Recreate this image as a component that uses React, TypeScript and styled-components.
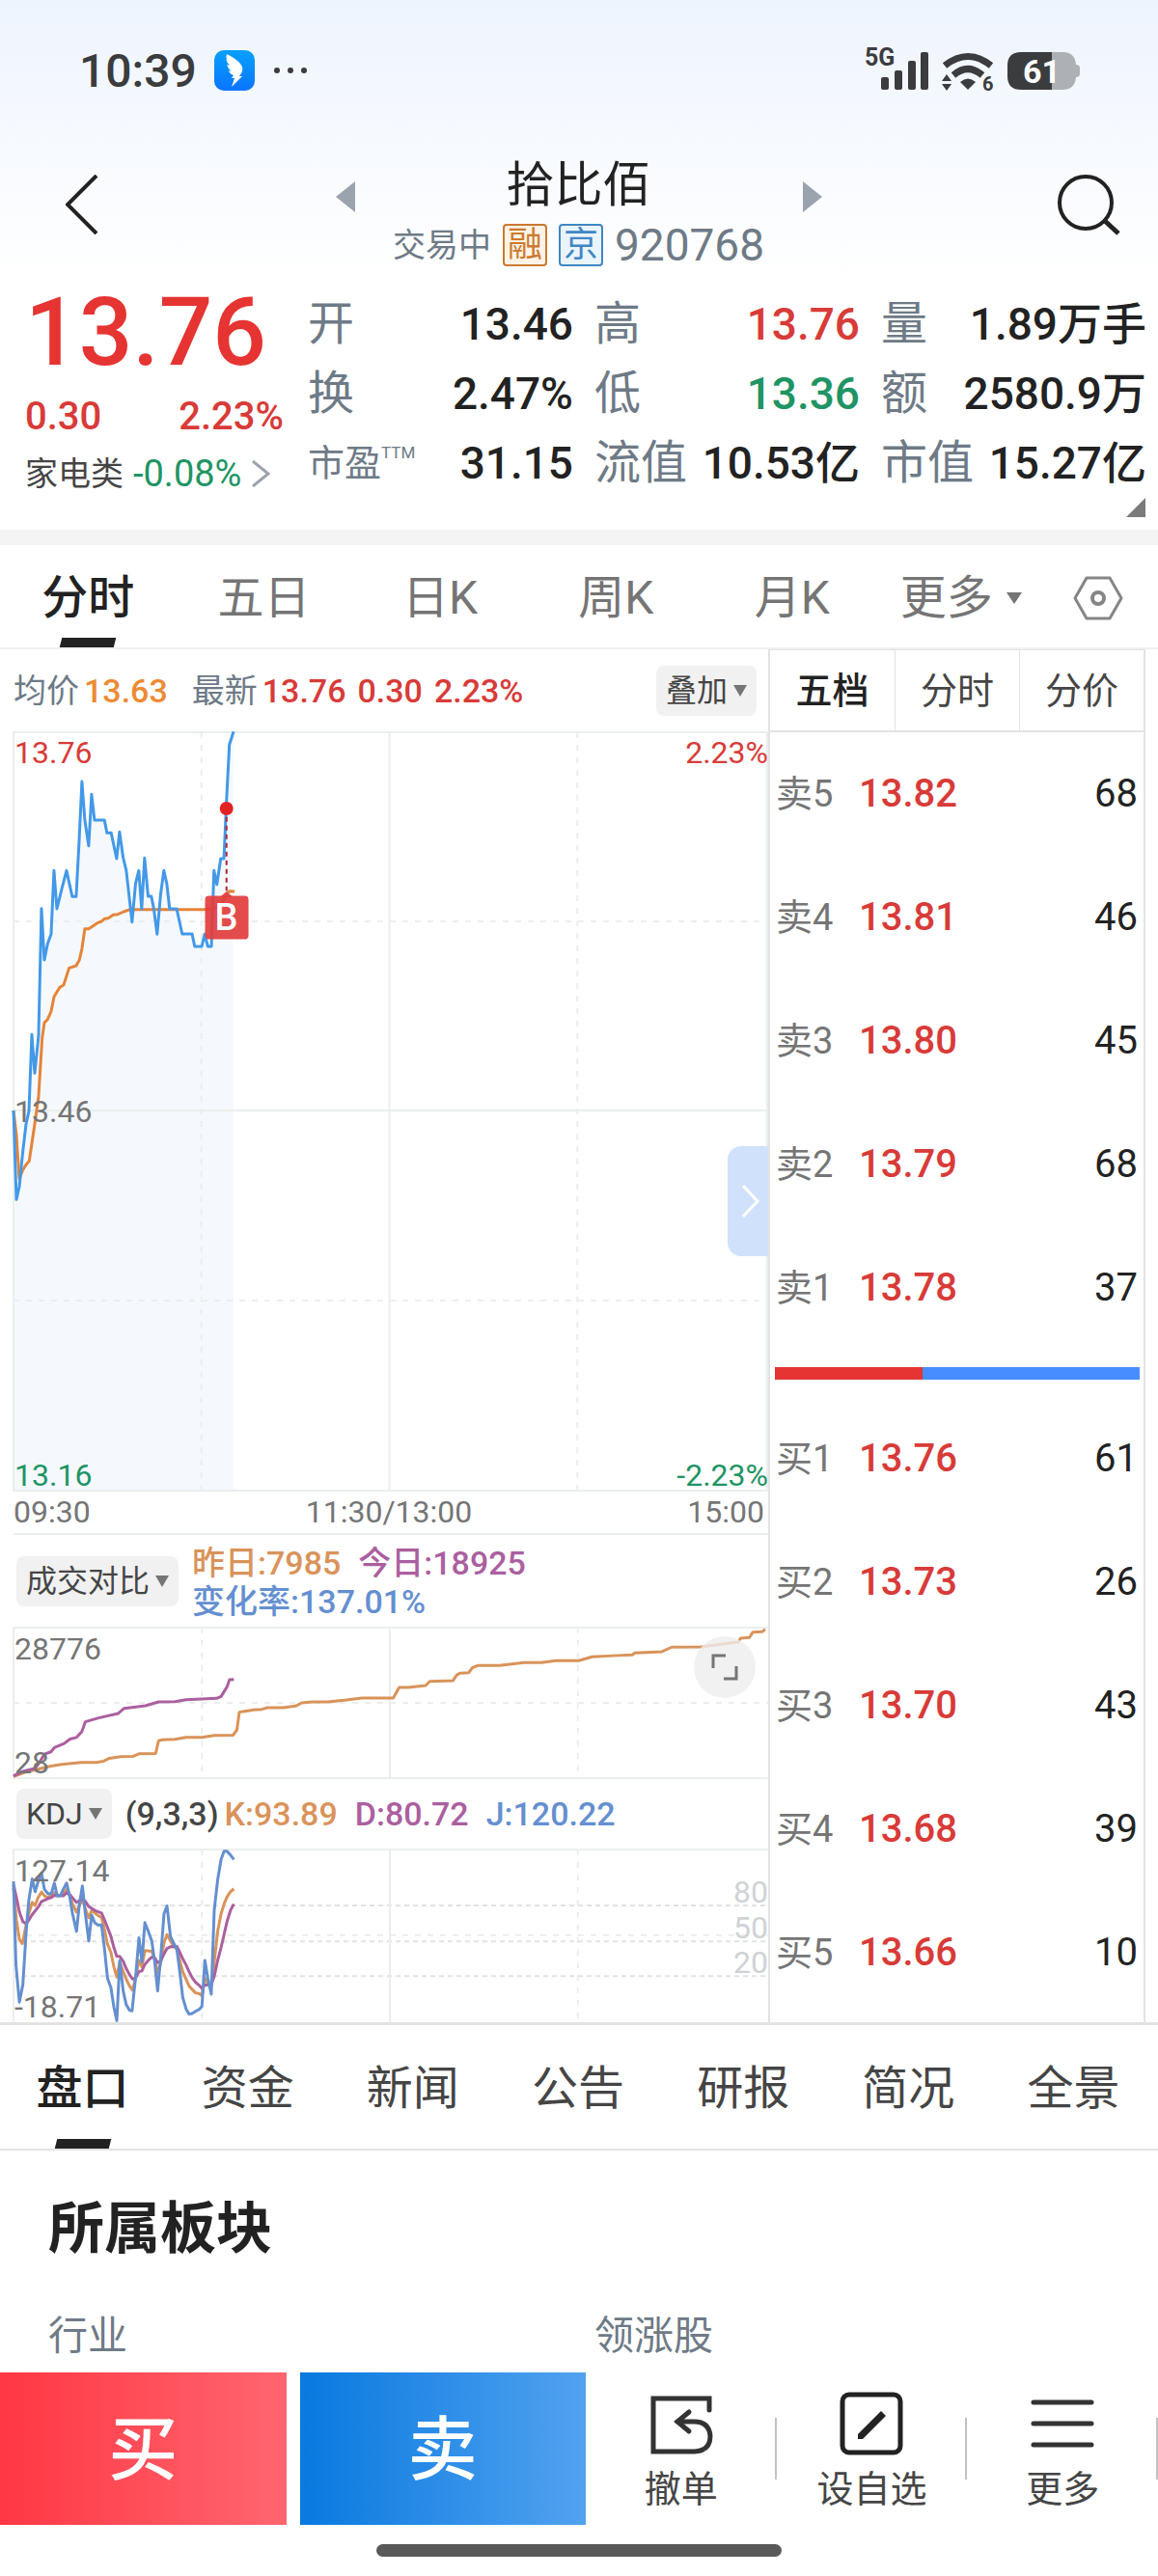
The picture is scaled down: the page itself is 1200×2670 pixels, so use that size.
import React, { useState } from "react";
import styled, { createGlobalStyle } from "styled-components";

const color = {
  ink: "#222222",
  text: "#454545",
  muted: "#757575",
  slate: "#6e7a86",
  red: "#d83b38",
  hot: "#e53432",
  green: "#1f9464",
  orange: "#d9935a",
  purple: "#ab5f9f",
  blue: "#648fd0",
  line: "#e3e3e3",
  grid: "#ebeeee",
};

const GlobalStyle = createGlobalStyle`
  *, *::before, *::after { box-sizing: border-box; }
  body { margin: 0; background: #fff; }
  body, button, table {
    font-family: Roboto, "Noto Sans CJK SC", sans-serif;
    color: ${color.ink};
  }
  button { margin: 0; padding: 0; border: 0; background: none; cursor: pointer; }
  svg { display: block; }
  h1, h2, dl, dt, dd, p { margin: 0; font-weight: 400; }
`;

const Screen = styled.div`
  width: 100%;
  background: linear-gradient(#eef4fe 0, #ffffff 290px);
`;

/* ---------- status bar ---------- */

const StatusBar = styled.div`
  display: flex;
  align-items: center;
  height: 146px;
  padding: 0 80px 0 82px;
  color: #3b3c3e;
`;

const Clock = styled.time`
  padding-top: 2px;
  font-size: 48px;
  line-height: 56px;
  font-weight: 500;
`;

const AppBadge = styled.span`
  display: grid;
  place-items: center;
  width: 42px;
  height: 42px;
  margin: 0 20px 0 18px;
  border-radius: 10px;
  background: linear-gradient(#07a0fe, #0a75fd);
`;

const StatusIcons = styled.svg`
  margin-left: auto;
  font-family: Roboto, sans-serif;
  font-weight: 700;
`;

/* ---------- header ---------- */

const Header = styled.header`
  display: grid;
  grid-template-columns: 1fr 504px 1fr;
  align-items: center;
  padding: 0 39px 0 68px;
  height: 132px;
`;

const IconButton = styled.button<{ $end?: boolean }>`
  display: flex;
  justify-self: ${(p) => (p.$end ? "end" : "start")};
`;

const Stepper = styled.div`
  display: flex;
  justify-content: space-between;
  align-items: flex-start;
  padding-top: 20px;
  margin-left: -15px;
  margin-right: 15px;
`;

const StepButton = styled.button`
  padding-top: 22px;
`;

const TitleBlock = styled.div`
  display: flex;
  flex-direction: column;
  align-items: center;
  gap: 12px;
`;

const Title = styled.h1`
  font-size: 50px;
  line-height: 52px;
`;

const SubTitle = styled.p`
  display: flex;
  align-items: center;
  gap: 12px;
  font-size: 34px;
  line-height: 48px;
  color: ${color.slate};
`;

const Tag = styled.span<{ $tone: string; $bg: string }>`
  width: 46px;
  height: 44px;
  border: 2px solid ${(p) => p.$tone};
  border-radius: 4px;
  background: ${(p) => p.$bg};
  color: ${(p) => p.$tone};
  line-height: 40px;
  text-align: center;
  font-size: 36px;
`;

const Code = styled.span`
  font-size: 46px;
`;

/* ---------- quote summary ---------- */

const Summary = styled.section`
  display: grid;
  grid-template-columns: 268px 1fr;
  column-gap: 25px;
  padding: 21px 12px 0 26px;
`;

const PricePane = styled.div`
  display: flex;
  flex-direction: column;
`;

const LastPrice = styled.div`
  font-size: 98px;
  line-height: 92px;
  font-weight: 500;
  color: ${color.hot};
`;

const ChangeRow = styled.div`
  display: flex;
  justify-content: space-between;
  font-size: 40px;
  line-height: 82px;
  font-weight: 500;
  color: ${color.red};
`;

const SectorLink = styled.a`
  display: flex;
  align-items: center;
  gap: 10px;
  font-size: 34px;
  line-height: 36px;
  color: ${color.text};
  text-decoration: none;
  white-space: nowrap;
`;

const SectorChange = styled.span`
  font-size: 38px;
  color: ${color.green};
`;

const Stats = styled.dl`
  display: grid;
  grid-template-columns: repeat(3, 1fr);
  grid-auto-rows: 72px;
  column-gap: 22px;
  padding-top: 1px;
`;

const Stat = styled.div`
  display: flex;
  justify-content: space-between;
  align-items: center;
  white-space: nowrap;
`;

const StatLabel = styled.dt<{ $small?: boolean }>`
  display: flex;
  font-size: ${(p) => (p.$small ? 38 : 48)}px;
  line-height: 72px;
  color: ${color.slate};
`;

const Sup = styled.sup`
  font-size: 17px;
  line-height: 50px;
`;

const StatValue = styled.dd<{ $tone?: string }>`
  font-size: 46px;
  line-height: 72px;
  font-weight: 500;
  color: ${(p) => p.$tone || color.ink};
`;

const ExpandRow = styled.div`
  display: flex;
  justify-content: flex-end;
  align-items: flex-start;
  height: 33px;
  padding-right: 13px;
`;

const Band = styled.div`
  height: 16px;
  background: #f4f4f4;
`;

/* ---------- tabs ---------- */

const PeriodTabs = styled.nav`
  display: flex;
  height: 108px;
  padding-right: 4px;
  border-bottom: 2px solid #f0f0f0;
`;

const Tab = styled.button<{ $active?: boolean; $grow?: number; $strong?: boolean }>`
  position: relative;
  display: flex;
  flex: ${(p) => p.$grow || 1} 1 0;
  align-items: center;
  justify-content: center;
  gap: 14px;
  padding-top: 3px;
  font-size: 48px;
  line-height: 56px;
  font-weight: ${(p) => (p.$active ? 500 : 400)};
  color: ${(p) => (p.$active ? color.ink : p.$strong ? color.text : color.muted)};
  white-space: nowrap;

  &::after {
    content: "";
    display: ${(p) => (p.$active ? "block" : "none")};
    position: absolute;
    bottom: 0;
    left: 50%;
    width: 56px;
    height: 10px;
    background: ${color.ink};
    transform: translateX(-50%) skewX(-14deg);
  }
`;

const InfoTabs = styled.nav`
  display: flex;
  height: 133px;
  padding-right: 2px;
  border-top: 3px solid ${color.line};
  border-bottom: 2px solid ${color.line};
`;

/* ---------- market area ---------- */

const Market = styled.main`
  display: grid;
  grid-template-columns: 2fr 1fr;
  padding: 0 13px 0 14px;
`;

const Charts = styled.div`
  min-width: 0;
`;

const PanelHead = styled.div<{ $height: number }>`
  display: flex;
  align-items: center;
  height: ${(p) => p.$height}px;
  font-size: 34px;
  line-height: 40px;
  font-weight: 500;
  white-space: nowrap;
`;

const Reading = styled.span<{ $tone: string; $gap?: number; $regular?: boolean }>`
  margin-right: ${(p) => p.$gap || 0}px;
  color: ${(p) => p.$tone};
  font-weight: ${(p) => (p.$regular ? 400 : 500)};
`;

const Picker = styled.button<{ $end?: boolean }>`
  display: flex;
  flex: none;
  align-items: center;
  gap: 6px;
  height: 52px;
  margin-left: ${(p) => (p.$end ? "auto" : "3px")};
  margin-right: ${(p) => (p.$end ? 12 : 14)}px;
  padding: 0 10px;
  border-radius: 8px;
  background: #f1f1f1;
  color: ${color.text};
  font-size: 32px;
  line-height: 40px;
`;

const Readings = styled.div`
  padding-top: 2px;
`;

const Plot = styled.div<{ $height: number }>`
  position: relative;
  height: ${(p) => p.$height}px;

  > svg {
    width: 100%;
    height: 100%;
    overflow: visible;
  }
`;

const AxisLabel = styled.span<{ $top: string; $right?: boolean; $tone?: string }>`
  position: absolute;
  top: ${(p) => p.$top};
  ${(p) => (p.$right ? "right: 0;" : "left: 1px;")}
  transform: translateY(-50%);
  font-size: 32px;
  line-height: 34px;
  color: ${(p) => p.$tone || color.muted};
`;

const BuyMark = styled.span`
  position: absolute;
  left: 28.2%;
  top: 24.4%;
  width: 45px;
  height: 45px;
  transform: translate(-50%, -50%);
  border-radius: 4px;
  background: rgba(226, 61, 61, 0.93);
  color: #fff;
  font-size: 38px;
  line-height: 45px;
  font-weight: 500;
  text-align: center;
`;

const Drawer = styled.button`
  position: absolute;
  right: 0;
  top: 429px;
  display: grid;
  place-items: center;
  width: 42px;
  height: 114px;
  padding-left: 6px;
  border-radius: 14px 0 0 14px;
  background: #d0e1fb;
`;

const FullButton = styled.button`
  position: absolute;
  right: 13px;
  top: 9px;
  display: grid;
  place-items: center;
  width: 64px;
  height: 64px;
  border-radius: 50%;
  background: rgba(238, 238, 238, 0.8);
`;

const TimeAxis = styled.div`
  display: flex;
  justify-content: space-between;
  height: 46px;
  padding: 0 4px 0 0;
  border-bottom: 2px solid ${color.grid};
  font-size: 32px;
  line-height: 44px;
  color: ${color.muted};
`;

/* ---------- order book ---------- */

const Book = styled.aside`
  border: solid ${color.line};
  border-width: 0 2px;
`;

const BookTabs = styled.div`
  display: grid;
  grid-template-columns: repeat(3, 1fr);
  height: 86px;
  border: solid ${color.line};
  border-width: 1px 0 2px;
`;

const BookTab = styled.button<{ $active?: boolean }>`
  border-left: 1px solid ${color.line};
  font-size: 38px;
  line-height: 44px;
  font-weight: ${(p) => (p.$active ? 500 : 400)};
  color: ${(p) => (p.$active ? color.ink : color.text)};

  &:first-child {
    border-left: 0;
  }
`;

const Levels = styled.table`
  width: 100%;
  border-collapse: collapse;
  font-size: 40px;
  line-height: 48px;
`;

const LevelName = styled.th`
  width: 86px;
  height: 128px;
  padding: 0 0 0 6px;
  font-size: 38px;
  font-weight: 400;
  text-align: left;
  color: ${color.muted};
`;

const LevelPrice = styled.td`
  padding: 0 0 0 6px;
  font-weight: 500;
  color: ${color.red};
`;

const LevelQty = styled.td`
  padding: 0 6px 0 0;
  text-align: right;
`;

const Balance = styled.div`
  height: 13px;
  margin: 18px 4px 18px 5px;
  background: linear-gradient(${color.hot}, ${color.hot}) #478dff;
  background-size: 40.5% 100%;
  background-repeat: no-repeat;
`;

/* ---------- sector section ---------- */

const Sector = styled.section`
  padding: 42px 18px 8px 50px;
`;

const SectorTitle = styled.h2`
  margin-bottom: 42px;
  font-size: 58px;
  line-height: 78px;
  font-weight: 700;
`;

const SectorHead = styled.div`
  display: grid;
  grid-template-columns: 1fr 1fr;
  font-size: 41px;
  line-height: 60px;
  color: ${color.slate};
`;

/* ---------- bottom bar ---------- */

const ActionBar = styled.footer`
  display: grid;
  grid-template-columns: 3fr 14px 3fr 2fr 2fr 2fr;
  height: 158px;
`;

const TradeButton = styled.button<{ $from: string; $to: string }>`
  padding-top: 4px;
  background: linear-gradient(90deg, ${(p) => p.$from}, ${(p) => p.$to});
  color: #fff;
  font-size: 72px;
  line-height: 80px;
  font-weight: 500;
`;

const Action = styled.button`
  position: relative;
  display: flex;
  flex-direction: column;
  align-items: center;
  padding-top: 20px;
  gap: 12px;
  font-size: 38px;
  line-height: 46px;
  color: ${color.text};

  &::after {
    content: "";
    position: absolute;
    right: 0;
    top: 47px;
    width: 2px;
    height: 64px;
    background: #c2c2c2;
  }
`;

const HomeArea = styled.div`
  display: flex;
  justify-content: center;
  padding: 20px 0;
`;

const HomeBar = styled.span`
  width: 35%;
  height: 13px;
  border-radius: 7px;
  background: #595959;
`;

/* ---------- drawings ---------- */

const Caret = ({ size = 16 }: { size?: number }) => (
  <svg width={size} height={12} viewBox="0 0 16 12" preserveAspectRatio="none" aria-hidden="true">
    <path d="M0 0H16L8 12Z" fill="#757575" />
  </svg>
);

type LineProps = { d: string; stroke: string; width?: number; dash?: string };

const Line = ({ d, stroke, width = 3, dash }: LineProps) => (
  <path
    d={d}
    fill="none"
    stroke={stroke}
    strokeWidth={width}
    strokeDasharray={dash}
    strokeLinejoin="round"
    vectorEffect="non-scaling-stroke"
  />
);

const Curve = ({ points, stroke }: { points: string; stroke: string }) => (
  <polyline
    points={points}
    fill="none"
    stroke={stroke}
    strokeWidth={3}
    strokeLinejoin="round"
    vectorEffect="non-scaling-stroke"
  />
);

const price =
  "42,1233 51,1510 60,1470 70,1370 81,1275 90,1235 99,997 108,1117 120,1000 129,605 138,765 148,715 159,685 168,487 177,606 192,545 207,487 225,568 237,568 246,400 255,210 264,330 276,410 285,250 294,330 325,330 333,370 346,370 363,450 372,367 383,445 393,487 411,647 422,527 432,487 441,607 450,448 461,567 471,567 479,607 489,685 500,560 510,487 519,527 528,606 550,606 567,684 598,684 606,723 628,723 637,685 647,723 658,723 666,487 675,530 687,450 697,450 705,270 714,95 727,55";
const average =
  "42,1233 51,1310 60,1445 70,1420 80,1403 91,1390 108,1275 120,1190 131,1010 138,960 148,950 159,925 168,880 186,850 198,843 215,790 237,783 247,765 255,730 264,668 276,668 303,650 316,645 325,637 337,635 352,625 367,623 385,615 405,608 635,608 665,605 690,590 705,560 713,551 730,552";
const yesterdayVolume =
  "27,485 50,472 75,463 98,454 125,447 165,441 195,441 210,437 222,428 245,423 270,422 282,414 316,413 322,373 330,370 355,369 378,363 410,363 435,357 473,356 481,340 486,284 515,277 532,275 543,270 575,270 600,265 613,255 635,252 665,252 700,247 735,240 799,240 811,207 830,207 865,201 873,188 920,186 928,168 935,162 952,161 960,145 972,138 1015,138 1065,129 1100,129 1130,123 1176,123 1203,111 1255,107 1285,105 1290,99 1345,95 1365,81 1425,80 1480,69 1500,65 1505,53 1523,51 1530,34 1549,33 1555,25";
const todayVolume =
  "27,483 48,468 70,460 78,445 90,415 103,408 110,395 130,382 142,368 155,363 166,345 173,314 200,302 240,288 252,272 295,264 322,252 355,251 378,245 440,241 449,235 461,205 466,183 475,182";
const kdjK =
  "27,320 33,420 39,480 45,493 52,440 58,400 65,365 71,375 77,350 84,333 90,345 97,350 110,335 116,345 128,340 135,325 141,345 147,370 155,395 161,375 167,355 173,385 180,413 186,390 198,405 206,412 212,450 218,495 225,520 231,565 237,597 243,550 250,580 256,603 263,625 269,638 275,600 282,545 288,565 294,515 308,517 314,540 320,585 326,555 333,490 339,465 346,485 352,500 359,510 365,545 371,580 384,625 397,646 404,648 410,655 416,600 422,615 429,625 435,550 442,455 449,400 455,370 461,348 468,332 475,323";
const kdjD =
  "27,310 33,350 39,395 46,425 53,432 65,403 78,378 84,362 97,353 104,350 110,343 128,345 135,335 141,340 148,353 155,365 161,360 167,355 173,362 180,378 192,390 206,398 212,420 218,443 225,470 231,505 237,533 243,533 250,548 256,570 263,590 269,603 275,600 282,580 288,578 294,558 301,545 308,535 314,537 320,552 326,548 333,525 339,508 346,503 359,502 365,520 371,540 378,560 384,580 390,598 397,613 404,622 410,632 416,622 429,620 435,595 442,545 449,505 455,465 461,425 468,390 475,370";
const kdjJ =
  "27,300 32,560 39,675 46,620 53,450 58,360 65,292 71,332 77,300 84,275 90,325 97,338 104,338 110,305 116,345 122,345 128,325 135,305 141,345 147,400 155,455 161,370 167,314 173,400 180,485 186,405 192,428 198,435 206,435 212,510 218,600 225,630 231,690 237,732 243,545 250,640 256,682 263,700 268,702 275,600 282,475 288,550 294,428 301,455 308,485 314,550 320,640 326,540 333,400 339,376 346,470 352,490 359,510 365,580 371,660 378,697 384,712 390,710 397,703 404,698 410,688 416,545 422,600 429,650 435,390 442,295 449,232 455,206 461,206 468,218 475,232";

const dash = "6 7";

const PriceChart = () => (
  <svg viewBox="42 57 2349 2358" preserveAspectRatio="none" role="img" aria-label="分时走势">
    <polygon points={`${price} 727,2415 42,2415`} fill="#f5f9fe" />
    <Line d="M42 645H2391M42 1824H2391M627 57V2415M1797 57V2415" stroke={color.grid} width={2} dash={dash} />
    <Line d="M42 57V2415H2388V57ZM42 1233H2391M1212 57V2415" stroke={color.grid} width={2} />
    <Curve points={average} stroke="#e58439" />
    <Curve points={price} stroke="#4399e8" />
    <Line d="M705 320V550" stroke="#b02332" width={2} dash="5 4" />
    <path d="M684 570L705 552L726 570Z" fill="#e24949" />
    <circle cx={705} cy={294} r={21} fill="#e02222" />
  </svg>
);

const VolumeChart = () => (
  <svg viewBox="27 20 1534 470" preserveAspectRatio="none" role="img" aria-label="成交对比">
    <Line d="M27 255H1561M410 20V490M1174 20V490" stroke={color.grid} width={2} dash={dash} />
    <Line d="M27 20V490H1561M27 20H1561M792 20V490" stroke={color.grid} width={2} />
    <Curve points={yesterdayVolume} stroke={color.orange} />
    <Curve points={todayVolume} stroke={color.purple} />
  </svg>
);

const KdjChart = () => (
  <svg viewBox="27 201 1534 536" preserveAspectRatio="none" role="img" aria-label="KDJ">
    <Line d="M27 467H1561M410 201V737M1174 201V737" stroke={color.grid} width={2} dash={dash} />
    <Line d="M27 375H1561M27 486H1561M27 594H1561" stroke="#e2e2e2" width={2} dash="5 4" />
    <Line d="M27 737V201H1561M792 201V737" stroke={color.grid} width={2} />
    <Curve points={kdjK} stroke={color.orange} />
    <Curve points={kdjD} stroke={color.purple} />
    <Curve points={kdjJ} stroke={color.blue} />
  </svg>
);

const StatusIconSet = () => (
  <StatusIcons width={224} height={66} viewBox="0 -10 224 66" fill="#3b3c3e" aria-label="5G Wi-Fi 61%">
    <text x={0} y={18} fontSize={25}>5G</text>
    <rect x={17} y={30} width={8} height={13} rx={2} />
    <rect x={31} y={23} width={8} height={20} rx={2} />
    <rect x={45} y={13} width={8} height={30} rx={2} />
    <rect x={58} y={4} width={8} height={39} rx={2} />
    <g fill="none" stroke="#3b3c3e" strokeWidth={7}>
      <path d="M83 18Q107 -1 131 18" />
      <path d="M92 28Q107 15 122 28" />
    </g>
    <path d="M99 35Q107 28 115 35L107 43Z" />
    <path d="M85 27L90 34H80ZM85 44L90 37H80Z" />
    <text x={122} y={44} fontSize={20}>6</text>
    <path d="M162 4H194V43H162Q148 43 148 29V18Q148 4 162 4Z" />
    <path d="M194 4H205Q218 4 219 17Q223 17 223 21V26Q223 30 219 30Q218 43 205 43H194Z" fill="#adb0b4" />
    <text x={164} y={36} fontSize={34} fill="#fff">61</text>
  </StatusIcons>
);

/* ---------- data ---------- */

const stats = [
  { label: "开", value: "13.46" },
  { label: "高", value: "13.76", tone: color.red },
  { label: "量", value: "1.89万手" },
  { label: "换", value: "2.47%" },
  { label: "低", value: "13.36", tone: color.green },
  { label: "额", value: "2580.9万" },
  { label: "市盈", value: "31.15", sup: "TTM" },
  { label: "流值", value: "10.53亿" },
  { label: "市值", value: "15.27亿" },
];

const sells = [
  ["卖5", "13.82", "68"],
  ["卖4", "13.81", "46"],
  ["卖3", "13.80", "45"],
  ["卖2", "13.79", "68"],
  ["卖1", "13.78", "37"],
];
const buys = [
  ["买1", "13.76", "61"],
  ["买2", "13.73", "26"],
  ["买3", "13.70", "43"],
  ["买4", "13.68", "39"],
  ["买5", "13.66", "10"],
];
const periods = ["分时", "五日", "日K", "周K", "月K"];
const infoTabs = ["盘口", "资金", "新闻", "公告", "研报", "简况", "全景"];
const bookTabs = ["五档", "分时", "分价"];

const BookSide = ({ rows, label }: { rows: string[][]; label: string }) => (
  <Levels aria-label={label}>
    <tbody>
      {rows.map(([name, p, qty]) => (
        <tr key={name}>
          <LevelName scope="row">{name}</LevelName>
          <LevelPrice>{p}</LevelPrice>
          <LevelQty>{qty}</LevelQty>
        </tr>
      ))}
    </tbody>
  </Levels>
);

export default function App() {
  const [period, setPeriod] = useState("分时");
  const [info, setInfo] = useState("盘口");
  const [book, setBook] = useState("五档");

  return (
    <Screen>
      <GlobalStyle />
      <StatusBar>
        <Clock>10:39</Clock>
        <AppBadge>
          <svg width={24} height={36} viewBox="0 0 24 36" fill="#fff" aria-hidden="true">
            <path d="M4 1Q14 6 18 11Q22 16 19 21L17 24H20L9 35L12 26H9L11 23Q7 22 6 18L9 19Q5 16 4 12L7 13Q2 8 4 1Z" />
          </svg>
        </AppBadge>
        <svg width={34} height={6} viewBox="0 0 34 6" fill="#3b3c3e" aria-hidden="true">
          <circle cx={3} cy={3} r={3} />
          <circle cx={17} cy={3} r={3} />
          <circle cx={31} cy={3} r={3} />
        </svg>
        <StatusIconSet />
      </StatusBar>

      <Header>
        <IconButton aria-label="返回">
          <svg width={34} height={62} viewBox="0 0 34 62" fill="none" stroke="#222" strokeWidth={4}>
            <path d="M32 1L2 31L32 61" />
          </svg>
        </IconButton>
        <Stepper>
          <StepButton aria-label="上一只">
            <svg width={20} height={32} viewBox="0 0 20 32" fill="#9ba3ae"><path d="M20 0V32L0 16Z" /></svg>
          </StepButton>
          <TitleBlock>
            <Title>拾比佰</Title>
            <SubTitle>
              交易中
              <Tag $tone="#cc7a30" $bg="#fdf3e6">融</Tag>
              <Tag $tone="#4186c4" $bg="#e9f4fd">京</Tag>
              <Code>920768</Code>
            </SubTitle>
          </TitleBlock>
          <StepButton aria-label="下一只">
            <svg width={20} height={32} viewBox="0 0 20 32" fill="#9ba3ae"><path d="M0 0V32L20 16Z" /></svg>
          </StepButton>
        </Stepper>
        <IconButton $end aria-label="搜索">
          <svg width={66} height={64} viewBox="0 0 66 64" fill="none" stroke="#222" strokeWidth={4}>
            <circle cx={30} cy={30} r={27} />
            <path d="M50 49L64 62" strokeWidth={5} />
          </svg>
        </IconButton>
      </Header>

      <Summary>
        <PricePane>
          <LastPrice>13.76</LastPrice>
          <ChangeRow>
            <span>0.30</span>
            <span>2.23%</span>
          </ChangeRow>
          <SectorLink href="#sector">
            家电类
            <SectorChange>-0.08%</SectorChange>
            <svg width={20} height={28} viewBox="0 0 20 28" fill="none" stroke="#9ba3ae" strokeWidth={3}>
              <path d="M2 1L18 14L2 27" />
            </svg>
          </SectorLink>
        </PricePane>
        <Stats>
          {stats.map((s) => (
            <Stat key={s.label}>
              <StatLabel $small={!!s.sup}>
                {s.label}
                {s.sup && <Sup>{s.sup}</Sup>}
              </StatLabel>
              <StatValue $tone={s.tone}>{s.value}</StatValue>
            </Stat>
          ))}
        </Stats>
      </Summary>
      <ExpandRow>
        <IconButton aria-label="展开">
          <svg width={20} height={20} viewBox="0 0 20 20" fill="#7b7b7b"><path d="M20 0V20H0Z" /></svg>
        </IconButton>
      </ExpandRow>
      <Band />

      <PeriodTabs>
        {periods.map((p) => (
          <Tab key={p} $grow={183} $active={p === period} onClick={() => setPeriod(p)}>{p}</Tab>
        ))}
        <Tab $grow={168}>
          更多
          <Caret />
        </Tab>
        <Tab $grow={117} aria-label="设置">
          <svg width={52} height={46} viewBox="0 0 52 46" fill="none" stroke="#858585" strokeWidth={3}>
            <path d="M14 2H38L50 23L38 44H14L2 23Z" strokeLinejoin="round" />
            <circle cx={26} cy={23} r={6} strokeWidth={4} />
          </svg>
        </Tab>
      </PeriodTabs>

      <Market>
        <Charts>
          <PanelHead $height={86}>
            <Reading $tone={color.slate} $gap={5} $regular>均价</Reading>
            <Reading $tone="#ec8a33" $gap={25}>13.63</Reading>
            <Reading $tone={color.slate} $gap={5} $regular>最新</Reading>
            <Reading $tone={color.red} $gap={12}>13.76</Reading>
            <Reading $tone={color.red} $gap={12}>0.30</Reading>
            <Reading $tone={color.red}>2.23%</Reading>
            <Picker $end>叠加<Caret size={14} /></Picker>
          </PanelHead>
          <Plot $height={786}>
            <PriceChart />
            <AxisLabel $top="21px" $tone={color.red}>13.76</AxisLabel>
            <AxisLabel $top="50%">13.46</AxisLabel>
            <AxisLabel $top="770px" $tone={color.green}>13.16</AxisLabel>
            <AxisLabel $top="21px" $tone={color.red} $right>2.23%</AxisLabel>
            <AxisLabel $top="770px" $tone={color.green} $right>-2.23%</AxisLabel>
            <BuyMark>B</BuyMark>
            <Drawer aria-label="收起盘口">
              <svg width={18} height={34} viewBox="0 0 18 34" fill="none" stroke="#fff" strokeWidth={3}>
                <path d="M1 1L16 17L1 33" />
              </svg>
            </Drawer>
          </Plot>
          <TimeAxis>
            <span>09:30</span>
            <span>11:30/13:00</span>
            <span>15:00</span>
          </TimeAxis>

          <PanelHead $height={96}>
            <Picker>成交对比<Caret size={14} /></Picker>
            <Readings>
              <div>
                <Reading $tone={color.orange} $gap={18}>昨日:7985</Reading>
                <Reading $tone={color.purple}>今日:18925</Reading>
              </div>
              <div>
                <Reading $tone={color.blue}>变化率:137.01%</Reading>
              </div>
            </Readings>
          </PanelHead>
          <Plot $height={156}>
            <VolumeChart />
            <AxisLabel $top="22px">28776</AxisLabel>
            <AxisLabel $top="140px">28</AxisLabel>
            <FullButton aria-label="全屏">
              <svg width={28} height={28} viewBox="0 0 28 28" fill="none" stroke="#757575" strokeWidth={3}>
                <path d="M2 15V2H15M26 13V26H13" />
              </svg>
            </FullButton>
          </Plot>

          <PanelHead $height={74}>
            <Picker>KDJ<Caret size={14} /></Picker>
            <Reading $tone={color.text} $gap={6}>(9,3,3)</Reading>
            <Reading $tone={color.orange} $gap={18}>K:93.89</Reading>
            <Reading $tone={color.purple} $gap={18}>D:80.72</Reading>
            <Reading $tone={color.blue}>J:120.22</Reading>
          </PanelHead>
          <Plot $height={179}>
            <KdjChart />
            <AxisLabel $top="22px">127.14</AxisLabel>
            <AxisLabel $top="163px">-18.71</AxisLabel>
            <AxisLabel $top="44px" $tone="#cfd2d6" $right>80</AxisLabel>
            <AxisLabel $top="81px" $tone="#cfd2d6" $right>50</AxisLabel>
            <AxisLabel $top="117px" $tone="#cfd2d6" $right>20</AxisLabel>
          </Plot>
        </Charts>

        <Book>
          <BookTabs>
            {bookTabs.map((b) => (
              <BookTab key={b} $active={b === book} onClick={() => setBook(b)}>{b}</BookTab>
            ))}
          </BookTabs>
          <BookSide rows={sells} label="卖盘" />
          <Balance />
          <BookSide rows={buys} label="买盘" />
        </Book>
      </Market>

      <InfoTabs>
        {infoTabs.map((t) => (
          <Tab key={t} $strong $active={t === info} onClick={() => setInfo(t)}>{t}</Tab>
        ))}
      </InfoTabs>

      <Sector id="sector">
        <SectorTitle>所属板块</SectorTitle>
        <SectorHead>
          <span>行业</span>
          <span>领涨股</span>
        </SectorHead>
      </Sector>

      <ActionBar>
        <TradeButton $from="#ff3743" $to="#ff6670">买</TradeButton>
        <span />
        <TradeButton $from="#0879df" $to="#52a2f0">卖</TradeButton>
        <Action>
          <svg width={66} height={66} viewBox="0 0 66 66" fill="none" stroke="#333" strokeWidth={5} strokeLinecap="round">
            <path d="M62 19V7H4V62H47Q63 61 63 46Q62 31 46 31H29" />
            <path d="M41 21L29 31L41 41" />
          </svg>
          撤单
        </Action>
        <Action>
          <svg width={66} height={66} viewBox="0 0 66 66" fill="none" stroke="#222" strokeWidth={5}>
            <rect x={3} y={3} width={60} height={60} rx={7} />
            <path d="M19 49V44L43 20L48 25L24 49Z" fill="#222" stroke="none" />
          </svg>
          设自选
        </Action>
        <Action>
          <svg width={66} height={66} viewBox="0 0 66 66" fill="none" stroke="#333" strokeWidth={5} strokeLinecap="round">
            <path d="M3 11H63M3 33H63M3 55H63" />
          </svg>
          更多
        </Action>
      </ActionBar>
      <HomeArea>
        <HomeBar />
      </HomeArea>
    </Screen>
  );
}
